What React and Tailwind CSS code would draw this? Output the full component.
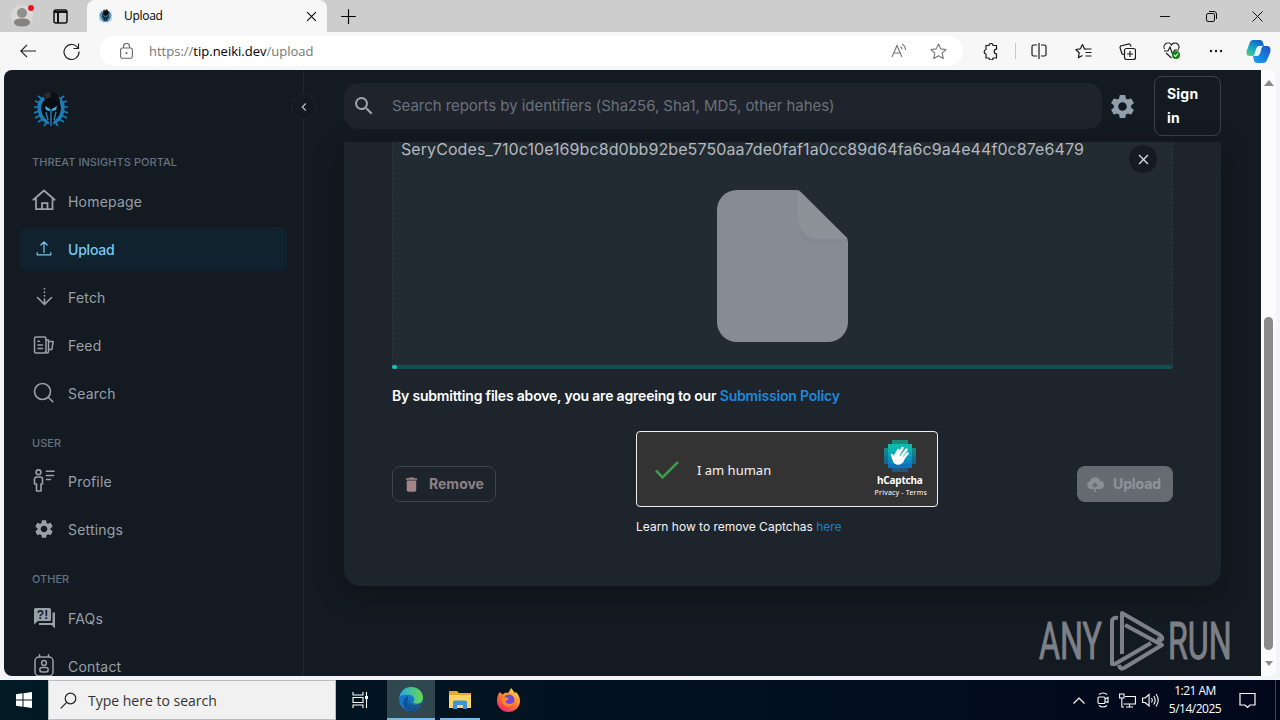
import React from "react";
import { MdSettings, MdSearch, MdDelete, MdClose, MdChevronLeft } from "react-icons/md";
import { clsx } from "clsx";

const ui = "font-['Open_Sans','Noto_Sans',sans-serif]";

function Crest({ className }) {
  return (
    <svg viewBox="0 0 34 36" className={className} fill="none">
      <g stroke="#1b7db8" strokeWidth="1.700">
        <path d="M8 8 4 5M6 12 1 10M5 16H0M5 20 0 22M7 24 1 27M9 28 4 31M13 31 10 35M26 8l4-3M28 12l5-2M29 16h5M29 20l5 2M27 24l6 3M25 28l5 3M21 31l3 4" />
        <path d="M10 7C5 11 4 16 6 22c1 5 5 8 9 10M24 7c5 4 6 9 4 15-1 5-5 8-9 10" strokeWidth="3.600" />
      </g>
      <path d="M17 3c-5 3-9 8-9 15 0 6 5 11 9 15 4-4 9-9 9-15 0-7-4-12-9-15Z" fill="#080d12" />
      <path d="M18 0c4 2 9 6 8 13l-8-6Z" fill="#0b0f13" />
      <path d="M10 3l6-2 1 5-5 2Z" fill="#33292a" />
      <path d="m11 15 5 3v2l-4-1ZM23 15l-5 3v2l4-1Z" fill="#35b6ee" />
      <path d="M17 18v17M12 21l2 8M22 21l-2 8" stroke="#2384b8" strokeWidth="1.400" />
    </svg>
  );
}

function Icon({ children, size = 24, className, sw = 1.5 }) {
  return (
    <svg width={size} height={size} viewBox="0 0 24 24" fill="none" stroke="currentColor" strokeWidth={sw} strokeLinecap="round" strokeLinejoin="round" className={clsx("shrink-0", className)}>
      {children}
    </svg>
  );
}

const icons = {
  home: <Icon sw={1.8}><path d="M.800 11.300 12 1.500l11.200 9.800M4 9v11.200h16.500V9M10 20.200v-6h5.500v6" strokeLinecap="butt" strokeLinejoin="miter" /></Icon>,
  upload: <Icon sw={1.2}><path d="M12 15.500V5M8.800 8 12 4.800 15.200 8M5.200 15.500v2.300h13.600v-2.300" /></Icon>,
  fetch: <Icon sw={1.6}><path d="m5.500 12.500 7 7 7-7M12.500 18v-4" /><path d="M12.500 11v-7.500" strokeDasharray=".5 3" /></Icon>,
  feed: <Icon sw={1.5}><rect x="2.500" y="4" width="11.500" height="16" rx="1.500" /><path d="M6 8.200h1.500M6 12h4.500M6 15.500h4.500M14 7h2.500v11.500a1.500 1.500 0 0 1-3 0M16.500 8.500H21.200l-1.400 8H17" /></Icon>,
  search: <Icon sw={1.600}><circle cx="10.500" cy="10.500" r="8" /><path d="m16.300 16.300 4.500 4.500" /></Icon>,
  profile: <Icon sw={1.6}><circle cx="6.500" cy="3.300" r="2.400" /><path d="M4.500 8h4a2 2 0 0 1 2 2v5H9v7H4.500v-7H2.500v-5a2 2 0 0 1 2-2ZM14.500 2.300H22M14.500 6.500H21.500M14.500 10.500H18.500" /></Icon>,
  settings: <MdSettings className="w-[22px] h-[22px] mx-px shrink-0" />,
  faqs: (
    <svg width="24" height="24" viewBox="0 0 24 24" fill="currentColor" className="shrink-0">
      <path d="M3.500 2h14A1.500 1.500 0 0 1 19 3.500v10a1.500 1.500 0 0 1-1.500 1.500H6l-4 3.500v-15A1.500 1.500 0 0 1 3.500 2ZM20.500 6.500H23V22.500l-3.500-3.500H7v-2h13.500Z" />
      <text x="10.500" y="12.800" textAnchor="middle" className="font-['Liberation_Sans',sans-serif] font-bold text-[12px]" fill="#141a21">?!</text>
    </svg>
  ),
  contact: <Icon sw={1.5}><rect x="3" y="3" width="18" height="19" rx="4" /><path d="M7.500.800v2.200M16.500.800v2.200" /><circle cx="12" cy="9" r="2.400" /><rect x="7.800" y="13.500" width="8.400" height="4.500" rx="2.200" /></Icon>,
};

function NavItem({ icon, label, active }) {
  return (
    <div className={clsx("h-11 shrink-0 flex items-center gap-3 pl-3 rounded-lg text-[14px]", active ? "bg-[#11222f] text-[#79c9f2] font-medium tracking-[-0.2px]" : "text-[#98a0a9] tracking-[0.2px]")}>
      {icons[icon]}
      <span>{label}</span>
    </div>
  );
}

function Sidebar() {
  return (
    <div className="w-[300px] shrink-0 border-r border-[#20262e] px-4 flex flex-col overflow-hidden">
      <div className="h-[84px] shrink-0 pt-[21px] pl-[14px]">
        <Crest className="w-[34px] h-[36px]" />
      </div>
      <div className="pl-3 pb-[9px] text-[11px] leading-4 font-medium tracking-[0.05px] text-[#637381]">THREAT INSIGHTS PORTAL</div>
      <div className="flex flex-col gap-1 shrink-0">
        <NavItem icon="home" label="Homepage" />
        <NavItem icon="upload" label="Upload" active />
        <NavItem icon="fetch" label="Fetch" />
        <NavItem icon="feed" label="Feed" />
        <NavItem icon="search" label="Search" />
      </div>
      <div className="pl-3 pt-5 pb-2 text-[11px] leading-4 font-medium text-[#637381]">USER</div>
      <div className="flex flex-col gap-1 shrink-0">
        <NavItem icon="profile" label="Profile" />
        <NavItem icon="settings" label="Settings" />
      </div>
      <div className="pl-3 pt-5 pb-[9px] text-[11px] leading-4 font-medium text-[#637381]">OTHER</div>
      <div className="flex flex-col gap-1 shrink-0">
        <NavItem icon="faqs" label="FAQs" />
        <NavItem icon="contact" label="Contact" />
      </div>
    </div>
  );
}

function TopBar() {
  return (
    <div className="h-[72px] shrink-0 flex items-center pl-10 pr-10">
      <div className="w-[758px] h-[46px] rounded-[14px] bg-[#1f232b] flex items-center pl-2">
        <MdSearch className="w-6 h-6 text-[#a0a6ae]" />
        <span className="ml-4 text-[15px] text-[#69717c] tracking-[-0.05px] whitespace-nowrap">Search reports by identifiers (Sha256, Sha1, MD5, other hahes)</span>
      </div>
      <MdSettings className="w-[29px] h-[29px] ml-1.5 text-[#919eab] shrink-0" />
      <div className="ml-auto w-[67px] h-[60px] rounded-lg border border-[#3c424b] pl-3 pt-[5px] text-[14px] leading-6 font-bold text-white tracking-[0.2px]">
        Sign<br />in
      </div>
    </div>
  );
}

// 8x8 pixel disc behind the waving hand
const disc = ["..xxxx..", ".xxxxxx.", "xxxxxxxx", "xxxxxxxx", "xxxxxxxx", "xxxxxxxx", ".xxxxxx.", "..xxxx.."];
const discRows = ["#14b5a6", "#10b9ae", "#0cb2b4", "#08a6bd", "#0795bd", "#0784bd", "#0b74bb", "#1668ad"];

function HCaptchaLogo() {
  return (
    <svg width="32" height="32" viewBox="0 0 32 32" className="mr-0.5">
      {disc.map((row, y) =>
        [...row].map((c, x) =>
          c === "x" ? <rect key={`${x}-${y}`} x={x * 4} y={y * 4} width="4" height="4" fill={discRows[y]} opacity={x === 0 || x === 7 || y === 0 || y === 7 ? 0.65 : 1} /> : null
        )
      )}
      <g stroke="#fff" strokeWidth="2.500" strokeLinecap="round" fill="none">
        <path d="m11 16 3.500-6M14 16l4.500-8M17 17l5.500-7.500M19 19l4.500-5.500M10 20l-2-5" />
      </g>
      <path d="m10 15 11 2-1 4c-2 4-7 5-10 2-2-2-1.500-6 0-8Z" fill="#fff" />
    </svg>
  );
}

function Captcha() {
  return (
    <div className="w-[302px] flex flex-col">
      <div className="h-[76px] rounded-[4px] border border-[#f0f0f0] bg-[#333333] flex items-center pl-[17px] pr-[10px] font-['Noto_Sans','Open_Sans',sans-serif]">
        <svg width="26" height="20" viewBox="0 0 26 20" fill="none" className="mt-0.5"><path d="m2 10.500 6.500 7L24 2" stroke="#3d9a4b" strokeWidth="2.600" /></svg>
        <span className="ml-[17px] mt-[3px] text-[13px] text-[#f4f4f4]">I am human</span>
        <div className="ml-auto -mt-px flex flex-col items-center text-white">
          <HCaptchaLogo />
          <span className="mt-0.5 mr-0.5 text-[10px] leading-3 font-bold tracking-[-0.2px]">hCaptcha</span>
          <span className="mt-[1px] text-[7px] leading-[11px] whitespace-nowrap tracking-[0.2px]">Privacy - Terms</span>
        </div>
      </div>
      <div className="mt-[11px] text-[12px] leading-[18px] text-[#f4f5f6] whitespace-nowrap">
        Learn how to remove Captchas <span className="text-[#1b7fc9]">here</span>
      </div>
    </div>
  );
}

function UploadCard() {
  return (
    <div className="mx-10 h-[444px] shrink-0 px-12 rounded-b-[16px] bg-[#1d242c] shadow-[0_8px_28px_rgba(0,0,0,0.28)]">
      <div className="h-[223px] border-x border-dashed border-[#2c353d] bg-[#222a32] flex flex-col">
        <div className="flex justify-between pl-2 pr-[15px] h-[48px]">
          <span className="text-[16px] leading-[15px] text-[#b4b9be] tracking-[0.08px]">SeryCodes_710c10e169bc8d0bb92be5750aa7de0faf1a0cc89d64fa6c9a4e44f0c87e6479</span>
          <div className="mt-[3px] w-7 h-7 rounded-full bg-[#151b22] text-[#d3d6d9] flex items-center justify-center">
            <MdClose className="w-[17px] h-[17px]" />
          </div>
        </div>
        <svg width="131" height="152" viewBox="0 0 131 152" className="mx-auto shrink-0">
          <defs>
            <linearGradient id="fold" x1="0" y1="0" x2="0" y2="1"><stop offset="0" stopColor="#7e858c" /><stop offset="1" stopColor="#858c93" /></linearGradient>
          </defs>
          <path d="M20 0h59q3 0 5 2l45 45q2 2 2 5v80a20 20 0 0 1-20 20H20A20 20 0 0 1 0 132V20A20 20 0 0 1 20 0Z" fill="#858c93" />
          <path d="M81 28v8q2 21 22 22h22v-9h-24q-18-1-20-21Z" fill="url(#fold)" />
          <path d="M81 0v29a20 20 0 0 0 20 20h30Z" fill="#8b9298" />
        </svg>
      </div>
      <div className="h-1 rounded-sm bg-[#154b53]">
        <div className="w-[5px] h-1 rounded-sm bg-[#20bcc2]" />
      </div>
      <div className="mt-[17px] text-[14px] leading-5 font-semibold text-white tracking-[-0.19px] whitespace-nowrap">
        By submitting files above, you are agreeing to our <span className="text-[#1d89dd]">Submission Policy</span>
      </div>
      <div className="mt-[25px] flex">
        <div className="mt-[35px] w-[104px] h-9 rounded-lg border border-[#41464d] flex items-center pl-[9px] text-[14px] font-bold text-[#8f8184]">
          <MdDelete className="w-[19px] h-[19px] mr-[8px] text-[#a38588]" />
          <span className="pb-px">Remove</span>
        </div>
        <div className="ml-[140px]">
          <Captcha />
        </div>
        <div className="ml-auto mt-[35px] w-24 h-9 rounded-lg bg-[#666b71] flex items-center pl-[9px] text-[14px] font-bold text-[#8f9499] tracking-[-0.1px]">
          <svg width="18" height="18" viewBox="0 0 18 18" className="mr-[9px]">
            <path d="M5 14a4 4 0 0 1-1-7.800 5.200 5.200 0 0 1 10-.2A4 4 0 0 1 14 14Z" fill="#898f95" />
            <path d="M9 17V9M6.500 11.200 9 8.700l2.500 2.500" stroke="#666b71" strokeWidth="1.600" fill="none" />
            <path d="M9 12.500V17" stroke="#898f95" strokeWidth="1.600" />
          </svg>
          <span className="pb-px">Upload</span>
        </div>
      </div>
    </div>
  );
}

function BrowserChrome() {
  return (
    <div className={clsx("shrink-0 text-black", ui)}>
      <div className="h-8 bg-[#cdcdcd] flex">
        <div className="w-[87px] flex items-center pl-[11px]">
          <svg width="24" height="24" viewBox="0 0 24 24" className="shrink-0">
            <circle cx="11" cy="12" r="11" fill="#d9d8d7" />
            <circle cx="11" cy="9" r="5" fill="#918f8e" />
            <path d="M3 18.500c0-3 3-4 8-4s8 1 8 4c0 2.500-3.500 4-8 4s-8-1.500-8-4Z" fill="#868483" />
            <circle cx="20" cy="4" r="3" fill="#e81123" />
          </svg>
          <svg width="15" height="15" viewBox="0 0 15 15" fill="none" stroke="#111" strokeWidth="1.500" className="ml-[18px]">
            <rect x="1" y="1" width="13" height="13" rx="2" />
            <path d="M1 3h13M5 4v10" strokeWidth="2" />
          </svg>
        </div>
        <div className="w-[240px] bg-[#f7f7f7] rounded-t-[8px] flex items-center pl-3 pr-2.5">
          <Crest className="w-[13px] h-[14px]" />
          <span className="ml-3 text-[12px] tracking-[-0.3px]">Upload</span>
          <Icon size={11} sw={2.200} className="ml-auto"><path d="m3 3 18 18M21 3 3 21" /></Icon>
        </div>
        <div className="flex items-center pl-[14px]">
          <Icon size={15} sw={1.900}><path d="M12 1v22M1 12h22" /></Icon>
        </div>
        <div className="ml-auto flex items-center gap-[35px] pr-[17px]">
          <svg width="11" height="11" viewBox="0 0 11 11" stroke="#111"><path d="M0 5.500h10" /></svg>
          <svg width="11" height="11" viewBox="0 0 11 11" stroke="#111" fill="none"><rect x=".5" y="2.500" width="8" height="8" rx="1.500" /><path d="M3 .5h5a2.500 2.500 0 0 1 2.500 2.500v5" /></svg>
          <svg width="11" height="11" viewBox="0 0 11 11" stroke="#111"><path d="m.5.500 10 10M10.500.500l-10 10" /></svg>
        </div>
      </div>
      <div className="h-[38px] bg-[#f7f7f7] flex items-center pl-5 pr-[9px]">
        <svg width="16" height="14" viewBox="0 0 16 14" fill="none" stroke="#222" strokeWidth="1.200"><path d="M16 7H1M7 .800.800 7 7 13.200" /></svg>
        <svg width="17" height="17" viewBox="0 0 17 17" fill="none" stroke="#222" strokeWidth="1.200" className="ml-[27px]"><path d="M15 5.200A7.500 7.500 0 1 0 16 8.500M15.500.500v5h-5" /></svg>
        <div className="ml-5 w-[863px] h-[30px] rounded-full bg-white flex items-center pl-5">
          <svg width="13" height="16" viewBox="0 0 13 16" fill="none" stroke="#666" strokeWidth="1.100"><rect x=".600" y="5" width="11.800" height="10.200" rx="1.800" /><path d="M3.500 5V3.500a3 3 0 0 1 6 0V5" /><circle cx="6.500" cy="10" r=".5" fill="#666" /></svg>
          <span className="ml-4 mt-0.5 text-[13px] text-[#767676]">https://<span className="text-black">tip.neiki.dev</span>/upload</span>
          <div className="ml-auto flex items-center gap-[21px] pr-[15px] text-[#777]">
            <svg width="17" height="16" viewBox="0 0 17 16" fill="none" stroke="currentColor" strokeWidth="1.100"><path d="M1 14 6 2.500 11 14M2.700 10h6.600M9.500 3.500q1.500 1 1.500 3M11 1q3.500 2 3.500 6" /></svg>
            <Icon size={19} sw={1.400}><path d="m12 2.500 2.900 6.200 6.700.8-5 4.600 1.400 6.700-6-3.400-6 3.400 1.400-6.700-5-4.600 6.700-.8Z" /></Icon>
          </div>
        </div>
        <div className="ml-auto flex items-center text-[#1a1a1a]">
          <svg width="16" height="17" viewBox="0 0 16 17" fill="none" stroke="currentColor" strokeWidth="1.200"><path d="M3 2.500h3a2 2 0 0 1 4 0h3.500v3.700a2.200 2.200 0 0 0 0 4.600V15H10a2 2 0 0 1-4 0H3v-4a2.300 2.300 0 0 1 0-4.500Z" strokeLinejoin="round" /></svg>
          <div className="w-px h-4 bg-[#c8c8c8] ml-[16px] mr-[15px]" />
          <svg width="16" height="16" viewBox="0 0 16 16" fill="none" stroke="currentColor" strokeWidth="1.200"><path d="M6 2H2.500A1.500 1.500 0 0 0 1 3.500v8A1.500 1.500 0 0 0 2.500 13H6M10 2h3.500A1.500 1.500 0 0 1 15 3.500v8a1.500 1.500 0 0 1-1.500 1.500H10M8 0v16" /></svg>
          <svg width="17" height="17" viewBox="0 0 17 17" fill="none" stroke="currentColor" strokeWidth="1.200" className="ml-[28px]"><path d="M11 6.300 9.500 6 7.500 1.500 5.300 5.800.800 6.500l3.400 3.300-.8 5 4.100-2.300M9.500 6h7M10.500 9.500h6M10.500 13h6" strokeLinejoin="round" /></svg>
          <svg width="17" height="17" viewBox="0 0 17 17" fill="none" stroke="currentColor" strokeWidth="1.200" className="ml-[27px]"><rect x="5.500" y="5.500" width="11" height="11" rx="2" /><path d="M11 8v6M8 11h6M5 11.500 3 11 1 4.500 1.600 3 10 .800l1.300.800.800 2" /></svg>
          <svg width="18" height="18" viewBox="0 0 18 18" fill="none" stroke="currentColor" strokeWidth="1.100" className="ml-[27px]"><path d="M1.500 7A4 4 0 0 1 8.500 3a4 4 0 0 1 7 4M1 9h4l2-4 2.500 7L11.500 8H16M3 11l5.500 5" /><circle cx="13" cy="13" r="4" fill="#16831b" stroke="none" /><path d="m11 13 1.500 1.500L15 11.500" stroke="#fff" /></svg>
          <svg width="14" height="4" viewBox="0 0 14 4" fill="currentColor" className="ml-[28px]"><circle cx="2" cy="2" r="1.200" /><circle cx="7" cy="2" r="1.200" /><circle cx="12" cy="2" r="1.200" /></svg>
          <svg width="25" height="23" viewBox="0 0 25 23" className="ml-[23px]">
            <defs>
              <linearGradient id="cpA" x1="0" y1="1" x2=".6" y2="0"><stop offset="0" stopColor="#63cf80" /><stop offset=".5" stopColor="#14a9c4" /><stop offset="1" stopColor="#1564c9" /></linearGradient>
              <linearGradient id="cpB" x1="0" y1="1" x2="1" y2="0"><stop offset="0" stopColor="#18a8f2" /><stop offset="1" stopColor="#1b4fc4" /></linearGradient>
            </defs>
            <path d="M7 0h7c3 0 3 3 4 6h-5c-2 0-3 3-4 7-.5 2-1 3-3 3H4c-4 0-4-3-3-6l3-8c.5-1 1.500-2 3-2Z" fill="url(#cpA)" />
            <path d="M18 6h3c4 0 4 4 3 7l-3 7c-1 2-2 3-4 3h-6c-3 0-3-3-4-7h4c2 0 3-2 4-6 .5-2 1-4 3-4Z" fill="url(#cpB)" />
            <path d="M13 6h3c-2 1-2 3-3 6-1 3-2 4-4 4H8c1-2 2-9 5-10Z" fill="#e9f8ff" />
          </svg>
        </div>
      </div>
    </div>
  );
}

function Scrollbar() {
  return (
    <div className="w-[15px] bg-[#fcfcfc] rounded-r-lg flex flex-col items-center">
      <svg width="10" height="6" viewBox="0 0 10 6" className="mt-[10px]"><path d="M0 6 5 0l5 6Z" fill="#8a8a8a" /></svg>
      <div className="mt-[231px] w-[9px] h-[333px] rounded-full bg-[#8b8b8b]" />
      <svg width="8" height="5" viewBox="0 0 8 5" className="mt-[11px]"><path d="M0 0h8L4 5Z" fill="#8a8a8a" /></svg>
    </div>
  );
}

function Watermark() {
  return (
    <svg width="200" height="62" viewBox="0 0 200 62" className="absolute right-[23px] bottom-[4px]">
      <g fill="#7d8187" stroke="#7d8187" strokeWidth="1" className="font-['Roboto',sans-serif] text-[51px]">
        <text transform="translate(1 48.500) scale(.63 1)" textLength="100" lengthAdjust="spacingAndGlyphs">ANY</text>
        <text transform="translate(130 48.500) scale(.63 1)" textLength="101" lengthAdjust="spacingAndGlyphs">RUN</text>
      </g>
      <g fill="none" stroke="#7d8187" strokeWidth="4" strokeLinejoin="round" strokeLinecap="butt">
        <path d="M80 8q-6-1-6 4v42h3l36-21" />
        <path d="M84 44V3l38 22q4 3 1 5l-4-1" />
        <path d="m87 15 37 20-38 23q-4 2-5-3" />
      </g>
    </svg>
  );
}

function Taskbar() {
  return (
    <div className={clsx("h-10 shrink-0 bg-gradient-to-r from-[#011a23] to-[#02081c] flex text-white", ui)}>
      <div className="w-12 flex items-center justify-center">
        <svg width="16" height="16" viewBox="0 0 16 16" fill="#fff"><path d="M0 2.200 6.500 1.300v6.200H0ZM7.500 1.200 16 0v7.500H7.500ZM0 8.500h6.500v6.200L0 13.800ZM7.500 8.500H16V16l-8.500-1.200Z" /></svg>
      </div>
      <div className="w-[288px] bg-[#f1f1f1] border border-[#b9bcbe] flex items-center pl-[11px] text-[#333]">
        <svg width="17" height="17" viewBox="0 0 17 17" fill="none" stroke="#222" strokeWidth="1.200"><circle cx="10.500" cy="6.500" r="5.300" /><path d="M6.700 10.300.700 16.300" /></svg>
        <span className="ml-[11px] text-[14px]">Type here to search</span>
      </div>
      <div className="w-[51px] flex items-center justify-center pr-[3px]">
        <svg width="17" height="16" viewBox="0 0 17 16" fill="none" stroke="#fff" strokeWidth="1.100"><path d="M1 0v3h10V0M1 16v-3h10v3M1 5.500h10v5H1ZM14.500 0v16" /><path d="M13 4h3v3h-3Z" fill="#fff" stroke="none" /></svg>
      </div>
      <div className="w-12 bg-[#31474f] border-b-2 border-[#76b9ed] flex items-center justify-center">
        <svg width="24" height="24" viewBox="0 0 24 24">
          <defs>
            <linearGradient id="edTop" x1="0" x2="1"><stop offset="0" stopColor="#28a8df" /><stop offset="1" stopColor="#67d94f" /></linearGradient>
          </defs>
          <circle cx="12" cy="12" r="12" fill="#1477c9" />
          <path d="M.5 10C2 4 6 0 12 0c7 0 12 5 12 10.500 0 4-3 6-6.500 6-2.500 0-3.500-1-3-2 2-3 0-6-4-6.500C6 7.500 2 8 .5 10Z" fill="url(#edTop)" />
          <path d="M9 12c-2 5 3 10 12.500 7.300C19 22.500 16 24 12 24c-5 0-8-4-8-8 0-3 2-6 5-7Z" fill="#0f5499" />
          <path d="M10.500 11c-1.500 5 2 7.500 7 7 2 0 4-1 6-2.500l-1 2.500C15 22 7 18 10.500 11Z" fill="#31474f" />
        </svg>
      </div>
      <div className="ml-[5px] w-10 border-b-2 border-[#76b9ed] flex items-center justify-center">
        <svg width="22" height="19" viewBox="0 0 22 19"><path d="M0 1h8l2 2h12v15H0Z" fill="#e7a82c" /><path d="M0 5h22v13H0Z" fill="#fcd462" /><path d="M4 19v-6.500a2 2 0 0 1 2-2h10a2 2 0 0 1 2 2V19h-4v-4H8v4Z" fill="#3b92d4" /></svg>
      </div>
      <div className="w-[57px] flex items-center justify-center">
        <svg width="23" height="24" viewBox="0 0 23 24">
          <defs>
            <linearGradient id="fx" x1=".8" y1="0" x2=".2" y2="1"><stop offset="0" stopColor="#ffe14a" /><stop offset=".5" stopColor="#ff7b2b" /><stop offset="1" stopColor="#f0206c" /></linearGradient>
          </defs>
          <path d="M3 4c1 1 1.500 2 3 2.500C8 4 9.500 5 11 5c1-1 2-3 3-5 2 2 3 4 4 5l1-1c2 2 4 5 4 9 0 6-5 11-11.500 11S0 19 0 13c0-4 1-7 3-9Z" fill="url(#fx)" />
          <circle cx="12" cy="12" r="5.500" fill="#7148d8" />
          <path d="M5 10c3-2 5 0 7 .5-1 2-3 1.500-3.500 3C9 16 14 17 17 14c-1 5-10 7-12-1Z" fill="#ff8a29" />
        </svg>
      </div>
      <div className="ml-auto flex items-center">
        <svg width="12" height="7" viewBox="0 0 12 7" fill="none" stroke="#fff" strokeWidth="1.200"><path d="m.5 6.500 5.500-5.500 5.500 5.500" /></svg>
        <svg width="12" height="16" viewBox="0 0 12 16" fill="none" stroke="#fff" strokeWidth="1.100" className="ml-[12px]"><rect x="1" y="5" width="7" height="6.500" rx="1" /><path d="m8 7 3-1.500v5L8 9.500M2 2.500Q6-.500 10 2.500M2 13.500q4 3 8 0" /></svg>
        <svg width="17" height="15" viewBox="0 0 17 15" fill="none" stroke="#fff" strokeWidth="1.100" className="ml-[10px]"><path d="M6 3.500h10.400v7.500H4.500M10.500 11v3M7 14h7M.600 1h4.400v4H.600ZM2.800 5v9H5" /></svg>
        <svg width="17" height="14" viewBox="0 0 17 14" fill="none" stroke="#fff" strokeWidth="1.100" className="ml-[6px]"><path d="M.600 5v4.500h2.500l4 3.500V1.500L3.100 5ZM9.500 5q1.500 2.200 0 4.500M11.700 3q3 4.200 0 8.500M14 1q4.500 6 0 12.500" /></svg>
        <div className="ml-[6px] w-[60px] text-center text-[12px] leading-[18px] tracking-[-0.5px] whitespace-nowrap">
          <div>1:21 AM</div>
          <div>5/14/2025</div>
        </div>
        <svg width="17" height="17" viewBox="0 0 17 17" fill="none" stroke="#fff" strokeWidth="1.200" className="ml-[14px]"><path d="M1 1.500h15v11.500h-5L8.500 15.500 6 13H1Z" /></svg>
        <div className="ml-[19px] mr-1 w-px h-10 bg-[#3a4252]" />
      </div>
    </div>
  );
}

export default function App() {
  return (
    <div className="w-[1280px] h-[720px] overflow-hidden bg-[#f4f5f8] flex flex-col font-['Inter',sans-serif]">
      <BrowserChrome />
      <div className="h-[606px] shrink-0 pl-1 pr-1 flex">
        <div className="relative w-[1257px] bg-[#141a21] rounded-l-[8px] overflow-hidden flex">
          <Sidebar />
          <div className="flex-1 min-w-0 flex flex-col">
            <TopBar />
            <UploadCard />
          </div>
          <div className="absolute left-[287px] top-[24px] w-[26px] h-[26px] rounded-full border border-[#20262e] bg-[#141a21] text-[#b6bbc1] flex items-center justify-center">
            <MdChevronLeft className="w-4 h-4" />
          </div>
          <Watermark />
        </div>
        <Scrollbar />
      </div>
      <div className="h-1 shrink-0" />
      <Taskbar />
    </div>
  );
}
